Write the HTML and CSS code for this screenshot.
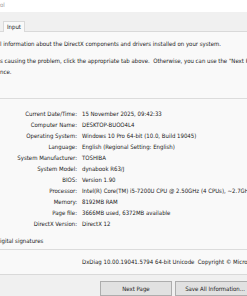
FILE: index.html
```html
<!DOCTYPE html>
<html lang="en">
<head>
    <meta charset="UTF-8">
    <meta name="viewport" content="width=device-width, initial-scale=1.0">
    <link rel="stylesheet" href="styles.css">
</head>
<body>

<div class="titlebar"><span class="title">ol</span></div>

<div class="tabs">
    <span class="tab">Input</span>
</div>

<div class="page">
    <p class="intro">l information about the DirectX components and drivers installed on your system.</p>
    <p class="intro gap">s causing the problem, click the appropriate tab above.&nbsp; Otherwise, you can use the "Next Page" button below to visit each page in seque</p>
    <p class="intro">nce.</p>

    <div class="group">
        <div class="info">
            <span class="label">Current Date/Time:</span><span>15 November 2025, 09:42:33</span>
            <span class="label">Computer Name:</span><span>DESKTOP-BUOO4L4</span>
            <span class="label">Operating System:</span><span>Windows 10 Pro 64-bit (10.0, Build 19045)</span>
            <span class="label">Language:</span><span>English (Regional Setting: English)</span>
            <span class="label">System Manufacturer:</span><span>TOSHIBA</span>
            <span class="label">System Model:</span><span>dynabook R63/J</span>
            <span class="label">BIOS:</span><span>Version 1.90</span>
            <span class="label">Processor:</span><span>Intel(R) Core(TM) i5-7200U CPU @ 2.50GHz (4 CPUs), ~2.7GHz</span>
            <span class="label">Memory:</span><span>8192MB RAM</span>
            <span class="label">Page file:</span><span>3666MB used, 6372MB available</span>
            <span class="label">DirectX Version:</span><span>DirectX 12</span>
        </div>
    </div>

    <p class="check">igital signatures</p>
    <p class="version">DxDiag 10.00.19041.5794 64-bit Unicode&nbsp; Copyright © Microsoft. All rights reserved.</p>
</div>

<div class="buttons">
    <button class="btn">Next Page</button>
    <button class="btn wide">Save All Information...</button>
</div>

</body>
</html>
```

FILE: styles.css
```css
body {
    margin: 0;
    width: 247px;
    height: 296px;
    overflow: hidden;
    font-family: "DejaVu Sans Condensed", "DejaVu Sans", sans-serif;
    font-size: 6px;
    color: #1a1a1a;
    background-color: #f0f0f0;
    white-space: nowrap;
}

p {
    margin: 0;
}

.titlebar {
    height: 12px;
    background-color: #fff;
}

.title {
    color: #9a9a9a;
    line-height: 10px;
}

.tabs {
    height: 19px;
    display: flex;
    align-items: flex-end;
    padding-left: 3px;
    border-bottom: 1px solid #d9d9d9;
}

.tab {
    height: 10px;
    line-height: 10px;
    padding: 0 3px;
    border: 1px solid #d9d9d9;
    border-bottom: none;
    background-color: #f9f9f9;
    margin-bottom: -1px;
}

.page {
    background-color: #f9f9f9;
    padding-top: 6px;
    border-bottom: 1px solid #d9d9d9;
    height: 236px;
}

.intro {
    line-height: 11px;
}

.intro.gap {
    margin-top: 6px;
}

.group {
    margin-top: 21px;
    border-top: 1px solid #dcdcdc;
    padding-top: 9px;
}

.info {
    display: grid;
    grid-template-columns: 77px auto;
    column-gap: 5px;
    line-height: 11px;
}

.label {
    text-align: right;
}

.check {
    margin-top: 6px;
    padding-bottom: 3px;
    border-bottom: 1px solid #dcdcdc;
    line-height: 11px;
}

.version {
    margin-top: 6px;
    padding-left: 82px;
    line-height: 11px;
}

.buttons {
    display: flex;
    gap: 3px;
    padding: 6px 0 0 100px;
}

.btn {
    font-family: inherit;
    font-size: 6px;
    color: #1a1a1a;
    height: 15px;
    width: 72px;
    flex-shrink: 0;
    padding: 0;
    border: 1px solid #adadad;
    background-color: #e1e1e1;
}

.btn.wide {
    width: 80px;
}
```
